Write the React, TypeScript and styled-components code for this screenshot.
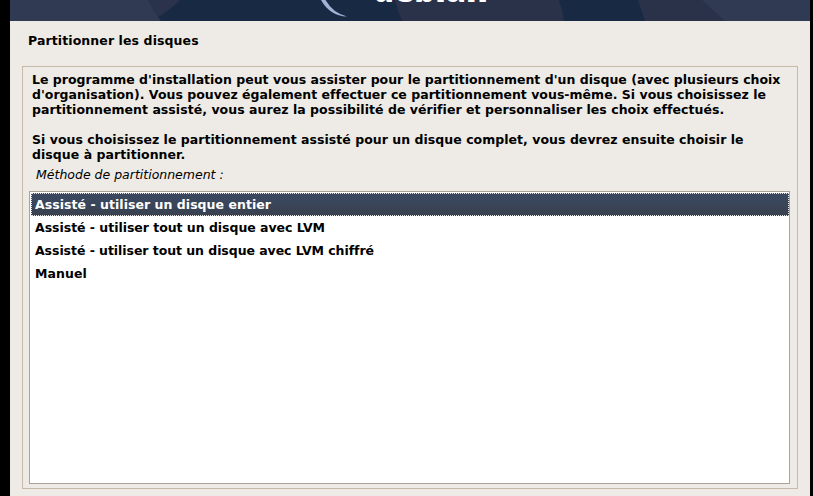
import React from "react";
import styled, { createGlobalStyle } from "styled-components";

const Global = createGlobalStyle`
  * { box-sizing: border-box; }
  body { margin: 0; background: #000; overflow: hidden; }
`;

const Screen = styled.main`
  width: 813px;
  height: 496px;
  padding: 0 3px 0 10px;
  background: #000;
  overflow: hidden;
  font: bold 12.5px/15px "DejaVu Sans", sans-serif;
  color: #000;
`;

const Installer = styled.div`
  height: 496px;
  display: flex;
  flex-direction: column;
  background: #eeebe6;
`;

const Banner = styled.header`
  height: 21px;
  flex: none;
  overflow: hidden;
  svg { display: block; }
`;

const Title = styled.h1`
  margin: 12px 0 18px 18px;
  font: inherit;
  letter-spacing: 0.1px;
`;

const Panel = styled.section`
  margin: 0 12px;
  height: 423px;
  flex: none;
  display: flex;
  flex-direction: column;
  padding: 5px 7px 4px 6px;
  border: 1px solid #c7b9a8;
`;

const Line = styled.div<{ $spacing: number }>`
  height: 15px;
  padding-left: 3px;
  white-space: pre;
  letter-spacing: ${(p) => p.$spacing}px;
`;

const Label = styled.div`
  height: 15px;
  margin: 5px 0 9px 7px;
  font-weight: normal;
  font-style: italic;
`;

const List = styled.div`
  width: 761px;
  height: 293px;
  padding: 1px 0 0 1px;
  border: 1px solid #aca397;
  background: #fff;
`;

const Option = styled.div<{ $selected: boolean; $spacing: number }>`
  height: 23px;
  width: 758px;
  padding: 3px;
  border: 1px dotted ${(p) => (p.$selected ? "#e5e5e5" : "transparent")};
  background: ${(p) => (p.$selected ? "linear-gradient(#3b4961, #39414f) border-box" : "none")};
  color: ${(p) => (p.$selected ? "#fff" : "#000")};
  white-space: pre;
  letter-spacing: ${(p) => p.$spacing}px;
`;

const lines = [
  { text: "Le programme d'installation peut vous assister pour le partitionnement d'un disque (avec plusieurs choix", spacing: 0.015 },
  { text: "d'organisation). Vous pouvez également effectuer ce partitionnement vous-même. Si vous choisissez le", spacing: 0.02 },
  { text: "partitionnement assisté, vous aurez la possibilité de vérifier et personnaliser les choix effectués.", spacing: 0.045 },
  { text: "", spacing: 0 },
  { text: "Si vous choisissez le partitionnement assisté pour un disque complet, vous devrez ensuite choisir le", spacing: 0.035 },
  { text: "disque à partitionner.", spacing: 0.05 },
];

const options = [
  { text: "Assisté - utiliser un disque entier", spacing: 0.04 },
  { text: "Assisté - utiliser tout un disque avec LVM", spacing: -0.03 },
  { text: "Assisté - utiliser tout un disque avec LVM chiffré", spacing: -0.055 },
  { text: "Manuel", spacing: 0.08 },
];

function DebianBanner() {
  return (
    <svg width="800" height="21" viewBox="10 0 800 21">
      <rect x="10" width="800" height="21" fill="#182943" />
      <path d="M148 0H180Q169 11 158 17Q152 9 148 0Z" fill="#2a334b" />
      <path d="M10 0H148Q153 11 161 21H10Z" fill="#313a53" />
      <path d="M395 0H559Q563 10 564 21H402Q397 10 395 0Z" fill="#293249" />
      <path d="M638 0H703L725 21H645Z" fill="#293249" />
      <path d="M702 0H810V21H725Z" fill="#313a53" />
      <path d="M321 0Q330 16 347 16.5Q333 13 325.5 0Z" fill="#a0b3d6" />
      <text x="373" y="2" textLength="115" lengthAdjust="spacingAndGlyphs" fill="#fff" fontFamily="Open Sans, sans-serif" fontWeight="800" fontSize="35">debian</text>
    </svg>
  );
}

export default function App() {
  return (
    <Screen>
      <Global />
      <Installer>
        <Banner><DebianBanner /></Banner>
        <Title>Partitionner les disques</Title>
        <Panel>
          {lines.map((line, i) => (
            <Line key={i} $spacing={line.spacing}>{line.text}</Line>
          ))}
          <Label>Méthode de partitionnement :</Label>
          <List role="listbox">
            {options.map((o, i) => (
              <Option key={o.text} role="option" aria-selected={i === 0} $selected={i === 0} $spacing={o.spacing}>{o.text}</Option>
            ))}
          </List>
        </Panel>
      </Installer>
    </Screen>
  );
}
